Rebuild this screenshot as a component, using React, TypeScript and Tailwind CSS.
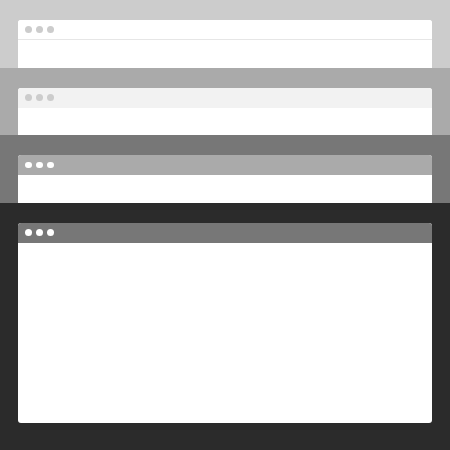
import React from 'react';

type Band = {
  bg: string;
  header: string;
  dot: string;
  line?: boolean;
  last?: boolean;
};

const bands: Band[] = [
  { bg: 'bg-[#cccccc]', header: 'bg-white', dot: 'bg-[#cccccc]', line: true },
  { bg: 'bg-[#aaaaaa]', header: 'bg-[#f2f2f2]', dot: 'bg-[#cccccc]' },
  { bg: 'bg-[#777777]', header: 'bg-[#aaaaaa]', dot: 'bg-white' },
  { bg: 'bg-[#2b2b2b]', header: 'bg-[#777777]', dot: 'bg-white', last: true },
];

const BrowserWindow: React.FC<{ band: Band }> = ({ band }) => (
  <div className={`flex flex-col bg-white rounded-t-[3px] overflow-hidden ${band.last ? 'h-[200px] rounded-b-[3px]' : 'h-[47.5px]'}`}>
    <div
      className={`h-[20px] shrink-0 flex items-center gap-[4.5px] pl-[7px] ${band.header} ${band.line ? 'border-b border-[#e6e6e6]' : ''}`}
    >
      <span className={`w-[6.5px] h-[6.5px] rounded-full ${band.dot}`} />
      <span className={`w-[6.5px] h-[6.5px] rounded-full ${band.dot}`} />
      <span className={`w-[6.5px] h-[6.5px] rounded-full ${band.dot}`} />
    </div>
  </div>
);

export default function App() {
  return (
    <div className="w-[450px] h-[450px] flex flex-col overflow-hidden">
      {bands.map((band, i) => (
        <div
          key={i}
          className={`${band.bg} px-[18px] pt-[20px] ${band.last ? 'flex-1' : 'h-[67.5px] shrink-0'}`}
        >
          <BrowserWindow band={band} />
        </div>
      ))}
    </div>
  );
}
